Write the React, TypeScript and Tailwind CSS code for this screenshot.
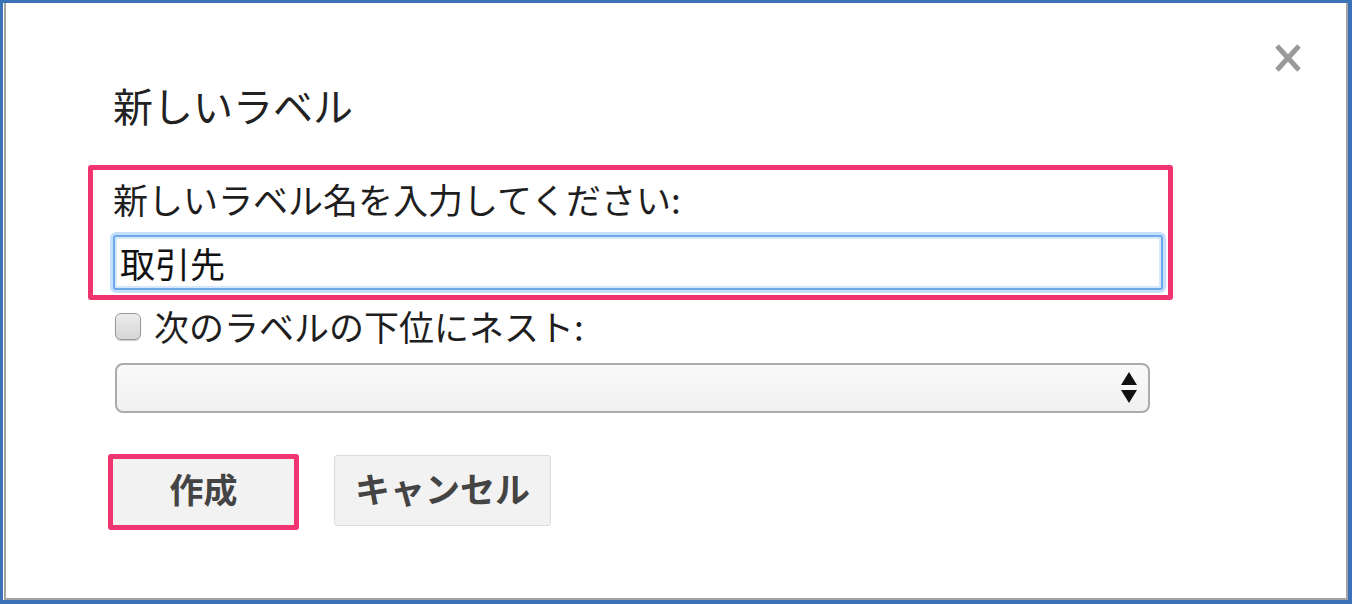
import React, { useState } from "react";

const font = { fontFamily: '"Noto Sans CJK JP", "Noto Sans", sans-serif' };

function CloseIcon() {
  return (
    <svg width="28" height="30" viewBox="0 0 28 30" className="block">
      <path d="M3 3 L25 27 M25 3 L3 27" stroke="#9a9a9a" strokeWidth="5" strokeLinecap="butt" />
    </svg>
  );
}

function SelectArrows() {
  return (
    <svg width="18" height="34" viewBox="0 0 18 34" className="block">
      <path d="M9 1 L17 14 L1 14 Z" fill="#111" />
      <path d="M1 19 L17 19 L9 32 Z" fill="#111" />
    </svg>
  );
}

export default function App() {
  const [name, setName] = useState("取引先");
  const [nest, setNest] = useState(false);

  return (
    <div className="w-[1352px] h-[604px] bg-white border-t-[3px] border-l-[3px] border-r-[4px] border-b-[4px] border-[#3c72b8] overflow-hidden" style={font}>
      <div className="relative h-full border-l-2 border-r-2 border-b-2 border-[#a3a3a3] bg-white ml-[1px]">
        <button className="absolute right-[44px] top-[40px]">
          <CloseIcon />
        </button>

        <div className="flex flex-col pl-[82px] pt-[78px]">
          <h1 className="pl-[25px] text-[40px] leading-[48px] text-[#222] font-normal">新しいラベル</h1>

          <div className="mt-[36px] w-[1085px] h-[135px] border-[5px] border-[#f0346f] rounded-[3px] pl-[20px] pr-[5px] pt-[9px]">
            <label className="block text-[35px] leading-[40px] text-[#1e1e1e]">
              新しいラベル名を入力してください:
            </label>
            <input
              value={name}
              onChange={(e) => setName(e.target.value)}
              className="mt-[16px] w-[1050px] h-[55px] px-[5px] text-[35px] text-[#111] bg-white border-2 border-[#6ea8ea] rounded-[3px] outline-none shadow-[0_0_0_3px_#c6e0fb,inset_0_0_0_2px_#d6e9fc]"
              style={font}
            />
          </div>

          <label className="mt-[6px] ml-[27px] flex items-center h-[40px] text-[35px] text-[#1e1e1e]">
            <span
              onClick={() => setNest(!nest)}
              className="w-[26px] h-[27px] rounded-[6px] border border-[#999] bg-gradient-to-b from-[#ececec] to-[#d6d6d6] shadow-[0_1px_1px_rgba(0,0,0,0.2)] mr-[13px]"
            />
            次のラベルの下位にネスト:
          </label>

          <div className="mt-[17px] ml-[27px] w-[1035px] h-[50px] rounded-[8px] border-2 border-[#ababab] bg-gradient-to-b from-[#fafafa] to-[#f1f1f1] flex items-center justify-end pr-[10px]">
            <SelectArrows />
          </div>

          <div className="mt-[41px] ml-[20px] flex items-start">
            <div className="border-[5px] border-[#f0346f] rounded-[3px]">
              <button className="w-[181px] h-[66px] pb-[6px] bg-[#f2f2f2] text-[34px] font-bold text-[#444] leading-none">
                作成
              </button>
            </div>
            <button className="ml-[35px] mt-[1px] w-[217px] h-[71px] pb-[6px] bg-[#f2f2f2] border border-[#dcdcdc] rounded-[3px] text-[35px] font-bold text-[#444] leading-none">
              キャンセル
            </button>
          </div>
        </div>
      </div>
    </div>
  );
}
